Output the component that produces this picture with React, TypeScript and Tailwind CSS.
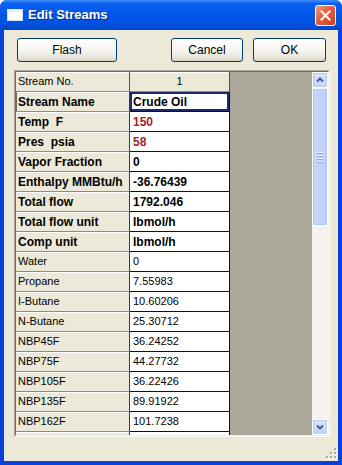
import React from 'react';

type Row = {
  label: string;
  value: string;
  bold?: boolean;
  red?: boolean;
  selected?: boolean;
};

const rows: Row[] = [
  { label: 'Stream Name', value: 'Crude Oil', bold: true, selected: true },
  { label: 'Temp  F', value: '150', bold: true, red: true },
  { label: 'Pres  psia', value: '58', bold: true, red: true },
  { label: 'Vapor Fraction', value: '0', bold: true },
  { label: 'Enthalpy MMBtu/h', value: '-36.76439', bold: true },
  { label: 'Total flow', value: '1792.046', bold: true },
  { label: 'Total flow unit', value: 'lbmol/h', bold: true },
  { label: 'Comp unit', value: 'lbmol/h', bold: true },
  { label: 'Water', value: '0' },
  { label: 'Propane', value: '7.55983' },
  { label: 'I-Butane', value: '10.60206' },
  { label: 'N-Butane', value: '25.30712' },
  { label: 'NBP45F', value: '36.24252' },
  { label: 'NBP75F', value: '44.27732' },
  { label: 'NBP105F', value: '36.22426' },
  { label: 'NBP135F', value: '89.91922' },
  { label: 'NBP162F', value: '101.7238' },
  { label: '', value: '' },
];

function XpButton({ label, width }: { label: string; width: string }) {
  return (
    <button
      className={`${width} h-[24px] rounded-[3px] border border-[#003c74] bg-[linear-gradient(to_bottom,#ffffff_0%,#f5f4ef_55%,#e3e0d6_90%,#d4cfc2_100%)] text-[12px] text-black flex items-center justify-center`}
    >
      {label}
    </button>
  );
}

function ScrollArrow({ up }: { up?: boolean }) {
  return (
    <div className="w-[16px] h-[16px] rounded-[2px] border border-white bg-[linear-gradient(to_bottom,#d9e4fd,#c1d2fc)] flex items-center justify-center shadow-[inset_0_0_0_1px_#b6c8f4]">
      <svg width="8" height="6" viewBox="0 0 8 6">
        <path
          d={up ? 'M1 4.5 L4 1.5 L7 4.5' : 'M1 1.5 L4 4.5 L7 1.5'}
          fill="none"
          stroke="#4d6185"
          strokeWidth="2"
        />
      </svg>
    </div>
  );
}

export default function App() {
  return (
    <div className="w-[342px] h-[465px] flex flex-col bg-[#0842d8] rounded-t-[7px] overflow-hidden font-['Liberation_Sans',Arial,sans-serif]">
      {/* Title bar */}
      <div className="h-[30px] shrink-0 flex items-center pl-[7px] pr-[6px] bg-[linear-gradient(to_bottom,#3d8ef9_0%,#0a5ff0_12%,#0058e8_45%,#0052e0_80%,#0046cc_100%)]">
        <div className="w-[16px] h-[12px] bg-white border border-[#d3def5] border-t-[3px] border-t-[#e9effa]" />
        <span className="ml-[5px] text-white font-bold text-[13px] [text-shadow:1px_1px_0_#0a2a7a]">
          Edit Streams
        </span>
        <div className="ml-auto w-[21px] h-[21px] rounded-[3px] border border-white bg-[linear-gradient(135deg,#f09a7c_0%,#e2603f_45%,#c9401f_100%)] flex items-center justify-center">
          <svg width="11" height="11" viewBox="0 0 11 11">
            <path d="M1.5 1.5 L9.5 9.5 M9.5 1.5 L1.5 9.5" stroke="#ffffff" strokeWidth="2" strokeLinecap="square" />
          </svg>
        </div>
      </div>

      {/* Client area */}
      <div className="flex-1 mx-[4px] mb-[4px] bg-[#ece9d8] flex flex-col relative">
        <div className="mt-[8px] flex pl-[13px] pr-[12px]">
          <XpButton label="Flash" width="w-[100px]" />
          <div className="ml-auto flex gap-[10px]">
            <XpButton label="Cancel" width="w-[72px]" />
            <XpButton label="OK" width="w-[73px]" />
          </div>
        </div>

        {/* Grid */}
        <div className="mt-[8px] ml-[10px] w-[316px] h-[367px] border border-t-[#aca899] border-l-[#aca899] border-r-white border-b-white">
          <div className="w-full h-full border border-t-[#716f64] border-l-[#716f64] border-r-[#f1efe2] border-b-[#f1efe2] flex">
            <div className="flex-1 bg-[#aca899] overflow-hidden">
              {/* Header row */}
              <div className="flex h-[20px]">
                <div className="w-[114px] h-full border-r border-b border-r-[#55534a] border-b-[#8f8c7d] bg-[#ece9d8] shadow-[inset_0_1px_0_#ffffff] pl-[2px] flex items-center text-[11px] text-black">
                  Stream No.
                </div>
                <div className="w-[100px] h-full border-r border-b border-r-[#55534a] border-b-[#8f8c7d] bg-[#ece9d8] shadow-[inset_0_1px_0_#ffffff] flex items-center justify-center text-[11px] text-black">
                  1
                </div>
              </div>
              {rows.map((r, i) => (
                <div key={i} className="flex h-[20px]">
                  <div
                    className={`w-[114px] h-full border-r border-b border-r-[#3c3b35] border-b-[#8f8c7d] bg-[#ece9d8] shadow-[inset_0_1px_0_#ffffff] pl-[2px] flex items-center whitespace-pre text-black ${
                      r.bold ? 'font-bold text-[12px]' : 'text-[11px]'
                    } ${r.selected ? 'shadow-[inset_1px_0_0_#716f64,inset_0_1px_0_#ffffff]' : ''}`}
                  >
                    {r.label}
                  </div>
                  <div
                    className={`w-[100px] h-full border-r border-b border-r-[#111111] border-b-[#111111] bg-white pl-[3px] flex items-center ${
                      r.bold ? 'font-bold text-[12px]' : 'text-[11px]'
                    } ${r.red ? 'text-[#a3222c]' : 'text-black'} ${
                      r.selected ? 'shadow-[inset_0_0_0_2px_#1b2b6e]' : ''
                    }`}
                  >
                    {r.value}
                  </div>
                </div>
              ))}
            </div>

            {/* Vertical scrollbar */}
            <div className="w-[16px] h-full bg-[#f4f3ee] flex flex-col">
              <ScrollArrow up />
              <div className="h-[138px] rounded-[2px] border border-white bg-[linear-gradient(to_right,#c9d7fc,#bccdf8)] shadow-[inset_0_0_0_1px_#b2c4f0] flex flex-col items-center justify-center gap-[2px]">
                {[0, 1, 2, 3].map((k) => (
                  <div key={k} className="w-[6px] h-[1px] bg-[#eef3fe] shadow-[0_1px_0_#8ca5e0]" />
                ))}
              </div>
              <div className="flex-1 bg-[#f4f3ee]" />
              <ScrollArrow />
            </div>
          </div>
        </div>

        {/* Size grip */}
        <svg className="absolute right-[1px] bottom-[2px]" width="11" height="11" viewBox="0 0 11 11">
          {[
            [8, 0],
            [8, 4],
            [4, 4],
            [8, 8],
            [4, 8],
            [0, 8],
          ].map(([x, y], k) => (
            <g key={k}>
              <rect x={x + 1} y={y + 1} width="2" height="2" fill="#ffffff" />
              <rect x={x} y={y} width="2" height="2" fill="#aca899" />
            </g>
          ))}
        </svg>
      </div>
    </div>
  );
}
